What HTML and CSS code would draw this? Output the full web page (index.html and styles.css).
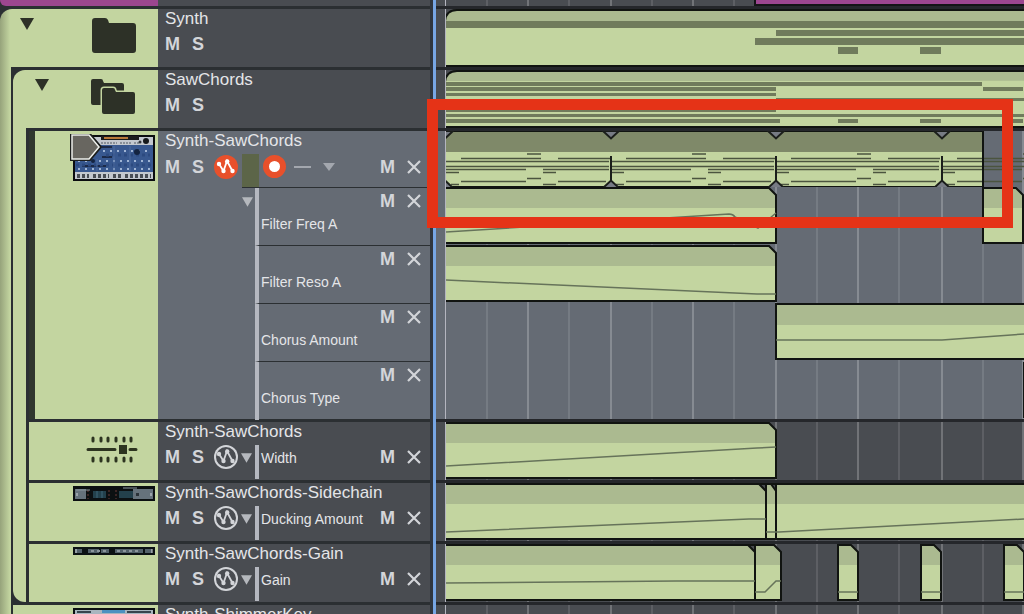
FILE: index.html
```
<!DOCTYPE html>
<html lang="en">
<head>
    <meta charset="UTF-8">
    <meta name="viewport" content="width=device-width, initial-scale=1.0">
    <title>Arrangement</title>
    <link rel="stylesheet" href="styles.css">
</head>
<body>
    <!-- shared shapes -->
    <svg class="defs" width="0" height="0">
        <defs>
            <symbol id="tri" viewBox="0 0 14 12"><path d="M0 0h14L7 12z" fill="currentColor"/></symbol>
            <symbol id="cross" viewBox="0 0 14 14"><path d="M1 1l12 12M13 1L1 13" stroke="currentColor" stroke-width="2.2" fill="none"/></symbol>
            <symbol id="auto" viewBox="0 0 24 24">
                <path d="M5 9l4.500 7L13 6l5.500 10" fill="none" stroke="currentColor" stroke-width="1.800"/>
                <circle cx="5" cy="9" r="2.200" fill="currentColor"/>
                <circle cx="9.500" cy="16" r="2.200" fill="currentColor"/>
                <circle cx="13.200" cy="6.500" r="2.200" fill="currentColor"/>
                <circle cx="18.500" cy="16" r="2.200" fill="currentColor"/>
            </symbol>
            <g id="grid">
                <path class="beat" d="M41 0v60M123 0v60M206 0v60M288 0v60M371 0v60M453 0v60M537 0v60"/>
                <path class="bar" d="M82 0v60M165 0v60M247 0v60M330 0v60M412 0v60M496 0v60M577 0v60"/>
            </g>
            <g id="phrase">
                <path d="M81 23h14M15 27.500h80M112 27.500h52M0 30.500h163M0 35.500h163M0 38.500h80M97 38.500h66M0 41.500h13M97 41.500h13M81 47.500h14M15 50.500h65M112 50.500h48M5 53.500h8M97 53.500h13"/>
            </g>
            <g id="joint">
                <path d="M-8 0L0 7.500 8 0z"/>
                <path d="M-8 57L0 49.500 8 57z"/>
                <path d="M0 25v25"/>
            </g>
            <g id="hit">
                <path class="clip" d="M0 1h13l7 7v48H0z"/>
                <path class="clip-head" d="M0 1h13l7 7v13H0z"/>
                <path class="edge" d="M0 1h13l7 7v48H0z"/>
                <path class="curve" d="M0 48h20"/>
            </g>
            <g id="clip330">
                <path class="clip" d="M-3 1h326l7 7v48H-3z"/>
                <path class="clip-head" d="M-3 1h326l7 7v13H-3z"/>
                <path class="edge" d="M-3 1h326l7 7v48H-3z"/>
            </g>
        </defs>
    </svg>

    <main class="arranger">
        <section class="tracks">
            <div class="previous-track"><div class="previous-color"></div></div>
            <div class="folder root">
                <div class="folder-head">
                    <div class="art">
                        <button class="fold" aria-label="Collapse Synth"><svg width="14" height="12"><use href="#tri"/></svg></button>
                        <svg width="44" height="36" viewBox="0 0 44 36"><path d="M3 0h10q2 0 3 2l1 3h24q3 0 3 3v24q0 3-3 3H3q-3 0-3-3V3q0-3 3-3z" fill="#2d3127"/></svg>
                    </div>
                    <div class="info">
                        <h2>Synth</h2>
                        <div class="controls"><button class="m">M</button><button class="s">S</button></div>
                    </div>
                </div>
                <div class="folder-body">
                    <div class="folder nested">
                        <div class="folder-head">
                            <div class="art">
                                <button class="fold" aria-label="Collapse SawChords"><svg width="14" height="12"><use href="#tri"/></svg></button>
                                <svg width="45" height="36" viewBox="0 0 45 36" fill="#2d3127">
                                    <path d="M2 0h8q2 0 2 2l1 2h18q2 0 2 2v20H2q-2 0-2-2V2q0-2 2-2z"/>
                                    <path d="M13 9h9q2 0 2 2l1 2h17q2 0 2 2v18q0 2-2 2H13q-2 0-2-2V11q0-2 2-2z" stroke="#c3d5a0" stroke-width="3" paint-order="stroke"/>
                                </svg>
                            </div>
                            <div class="info">
                                <h2>SawChords</h2>
                                <div class="controls"><button class="m">M</button><button class="s">S</button></div>
                            </div>
                        </div>
                        <div class="folder-body">
                            <article class="track selected">
                                <div class="art">
                                    <svg class="device" width="85" height="48" viewBox="0 0 85 48">
                                        <path d="M3 1h82v46H3z" fill="#0b0d10"/>
                                        <path d="M5 3h78v42H5z" fill="#c3c8cf"/>
                                        <path d="M31 2h38v4H31z" fill="#1b1b1c"/>
                                        <path d="M34 3h24v2H34z" fill="#b9793a"/>
                                        <path d="M5 11h78v27H5z" fill="#38588f"/>
                                        <path d="M31 9h16M50 9h12M64 9h5" stroke="#4f5661" stroke-dasharray="2 1"/>
                                        <path d="M32 13h10M32 23h10M12 32h24" stroke="#1c2a48" stroke-width="2"/>
                                        <path d="M33 17h48M8 27h74M8 35h74" stroke="#9fb4d4" stroke-width="2" stroke-dasharray="2 5"/>
                                        <path d="M6 31h76M36 21h44" stroke="#2c4a80" stroke-width="3" stroke-dasharray="3 3"/>
                                        <path d="M44 12v25M60 12v25M27 25v12" stroke="#4f6c9f"/>
                                        <circle cx="76" cy="7" r="3" fill="#16191c"/><circle cx="70" cy="8" r="1.500" fill="#33383e"/>
                                        <circle cx="67" cy="18" r="3" fill="#142441"/><circle cx="23" cy="27" r="2" fill="#142441"/>
                                        <path d="M7 42h12M23 42h16M43 42h9M55 42h26" stroke="#494e55" stroke-width="4" stroke-dasharray="3 2"/>
                                        <path d="M1 0h19l11 13-11 13H1z" fill="#686660" stroke="#1c1e1d" stroke-width="2"/>
                                        <path d="M2 1h17l10 12-10 12H2z" fill="none" stroke="#eceeea" stroke-width="1.500"/>
                                    </svg>
                                </div>
                                <div class="info">
                                    <h2>Synth-SawChords</h2>
                                    <div class="controls">
                                        <button class="m">M</button><button class="s">S</button>
                                        <button class="auto on" aria-label="Automation"><svg width="24" height="24"><use href="#auto"/></svg></button>
                                        <span class="meter"></span>
                                        <button class="record" aria-label="Record"></button>
                                        <span class="dash"></span>
                                        <button class="pick" aria-label="Input"><svg width="12" height="8" viewBox="0 0 14 12" preserveAspectRatio="none"><path d="M0 0h14L7 12z" fill="currentColor"/></svg></button>
                                        <button class="m end">M</button><button class="x" aria-label="Close"><svg width="14" height="14"><use href="#cross"/></svg></button>
                                    </div>
                                    <ul class="params">
                                        <li><button class="arrow" aria-label="Parameters"><svg width="11" height="10"><use href="#tri"/></svg></button><div class="param"><span>Filter Freq A</span><button class="m">M</button><button class="x" aria-label="Close"><svg width="14" height="14"><use href="#cross"/></svg></button></div></li>
                                        <li><div class="param"><span>Filter Reso A</span><button class="m">M</button><button class="x" aria-label="Close"><svg width="14" height="14"><use href="#cross"/></svg></button></div></li>
                                        <li><div class="param"><span>Chorus Amount</span><button class="m">M</button><button class="x" aria-label="Close"><svg width="14" height="14"><use href="#cross"/></svg></button></div></li>
                                        <li><div class="param"><span>Chorus Type</span><button class="m">M</button><button class="x" aria-label="Close"><svg width="14" height="14"><use href="#cross"/></svg></button></div></li>
                                    </ul>
                                </div>
                            </article>

                            <article class="track">
                                <div class="art mixer">
                                    <svg width="52" height="28" viewBox="0 0 52 28" stroke="#2d3420" stroke-width="3" stroke-linecap="round">
                                        <path d="M7 2v3M15 2v3M22 2v3M30 2v3M38 2v3M45 2v3M7 22v3M15 22v3M22 22v3M30 22v3M38 22v3M45 22v3M2 13.500h27M44 13.500h6"/>
                                        <path d="M33 9h8v9h-8z" fill="#2d3420" stroke="none"/>
                                    </svg>
                                </div>
                                <div class="info">
                                    <h2>Synth-SawChords</h2>
                                    <div class="controls">
                                        <button class="m">M</button><button class="s">S</button>
                                        <button class="auto" aria-label="Automation"><svg width="24" height="24"><use href="#auto"/></svg></button>
                                        <button class="arrow" aria-label="Parameters"><svg width="11" height="10"><use href="#tri"/></svg></button>
                                        <span class="name">Width</span>
                                        <button class="m end">M</button><button class="x" aria-label="Close"><svg width="14" height="14"><use href="#cross"/></svg></button>
                                    </div>
                                </div>
                            </article>

                            <article class="track">
                                <div class="art">
                                    <svg class="device" width="82" height="15" viewBox="0 0 82 15">
                                        <path d="M0 0h82v15H0z" fill="#0c1012"/>
                                        <path d="M2 3h11v10H2zM60 3h20v10H60z" fill="#66727c"/>
                                        <path d="M20 5h13v7H20zM46 5h14v7H46z" fill="#23404c"/>
                                        <path d="M24 5v7M29 5v7" stroke="#3f6577"/>
                                        <path d="M15 4v9M36 4v9M43 4v9" stroke="#6b3b39" stroke-dasharray="2 2"/>
                                        <path d="M3 4h14M50 2h14" stroke="#8a969d"/>
                                        <path d="M63 7h3v3h-3z" fill="#2a3138"/>
                                        <path d="M4 7v3M78 7v3" stroke="#cfd6da"/>
                                    </svg>
                                </div>
                                <div class="info">
                                    <h2>Synth-SawChords-Sidechain</h2>
                                    <div class="controls">
                                        <button class="m">M</button><button class="s">S</button>
                                        <button class="auto" aria-label="Automation"><svg width="24" height="24"><use href="#auto"/></svg></button>
                                        <button class="arrow" aria-label="Parameters"><svg width="11" height="10"><use href="#tri"/></svg></button>
                                        <span class="name">Ducking Amount</span>
                                        <button class="m end">M</button><button class="x" aria-label="Close"><svg width="14" height="14"><use href="#cross"/></svg></button>
                                    </div>
                                </div>
                            </article>

                            <article class="track">
                                <div class="art">
                                    <svg class="device" width="82" height="8" viewBox="0 0 82 8">
                                        <path d="M0 0h82v8H0z" fill="#0c1214"/>
                                        <path d="M2 4h7M15 4h11M28 4h8M42 4h28M72 4h7" stroke="#53616a" stroke-width="4"/>
                                        <path d="M18 4h18M44 4h24" stroke="#8b969c" stroke-width="2" stroke-dasharray="3 3"/>
                                        <path d="M3 2v4M79 2v4" stroke="#d8dddf"/>
                                    </svg>
                                </div>
                                <div class="info">
                                    <h2>Synth-SawChords-Gain</h2>
                                    <div class="controls">
                                        <button class="m">M</button><button class="s">S</button>
                                        <button class="auto" aria-label="Automation"><svg width="24" height="24"><use href="#auto"/></svg></button>
                                        <button class="arrow" aria-label="Parameters"><svg width="11" height="10"><use href="#tri"/></svg></button>
                                        <span class="name">Gain</span>
                                        <button class="m end">M</button><button class="x" aria-label="Close"><svg width="14" height="14"><use href="#cross"/></svg></button>
                                    </div>
                                </div>
                            </article>
                        </div>
                    </div>

                    <article class="track">
                        <div class="art">
                            <svg class="device" width="82" height="46" viewBox="0 0 82 46">
                                <path d="M0 0h82v46H0z" fill="#0c1012"/>
                                <path d="M2 2h78v42H2z" fill="#a9b6bf"/>
                                <path d="M29 2h23v3H29z" fill="#4d91c0"/>
                                <path d="M4 4h14M54 4h24" stroke="#39454e" stroke-width="2"/>
                            </svg>
                        </div>
                        <div class="info">
                            <h2>Synth-ShimmerKey</h2>
                        </div>
                    </article>
                </div>
            </div>
        </section>

        <div class="splitter"></div>

        <section class="lanes">
            <div class="lane first">
                <svg>
                    <use href="#grid"/>
                    <rect x="309" y="-4" width="3000" height="9" fill="#9c468f" stroke="#141416" stroke-width="2"/>
                </svg>
            </div>
            <div class="lane">
                <svg>
                    <path class="clip" d="M-1 12Q0 1 11 1H3000V57H-1z"/>
                    <path class="clip-head" d="M-1 12Q0 1 11 1H3000V12z"/>
                    <path class="edge" d="M-1 12Q0 1 11 1H3000V57H-1z"/>
                    <path class="notes" d="M0 12h3000v7H0zM330 21h3000v6H330zM309 29h3000v7H309zM392 38h20v7h-20zM474 38h21v7h-21z"/>
                </svg>
            </div>
            <div class="lane">
                <svg>
                    <path class="clip" d="M-1 12Q0 1 11 1H3000V57H-1z"/>
                    <path class="clip-head" d="M-1 11Q0 1 11 1H3000V10z"/>
                    <path class="edge" d="M-1 12Q0 1 11 1H3000V57H-1z"/>
                    <path class="notes" d="M0 12h536v4H0zM537 17h40v4h-40zM0 17h330v4H0zM0 23h330v3H0zM330 28h3000v3H330zM0 39h330v3H0zM0 44h3000v3H0zM0 49h334v4H0zM392 49h20v4h-20zM474 49h21v4h-21zM556 49h21v4h-21z"/>
                </svg>
            </div>
            <div class="lane group">
                <svg class="main-lane">
                    <use href="#grid"/>
                    <path class="clip" d="M-2 0h539v56H-2z"/>
                    <path d="M-2 0h539v21H-2z" fill="#7f8969"/>
                    <g class="midi">
                        <use href="#phrase"/><use href="#phrase" x="165"/><use href="#phrase" x="330"/><use href="#phrase" x="496"/>
                    </g>
                    <path class="edge" d="M-2 0h539v56H-2z"/>
                    <g class="joints">
                        <use href="#joint" x="-1"/><use href="#joint" x="165"/><use href="#joint" x="330"/><use href="#joint" x="496"/>
                    </g>
                </svg>
                <svg>
                    <use href="#grid"/>
                    <use href="#clip330"/>
                    <path class="curve" d="M0 45L283 27q4 0 6 3l23 11 18-15"/>
                    <path class="clip" d="M537 1h33l7 7v48h-40z"/>
                    <path class="clip-head" d="M537 1h33l7 7v13h-40z"/>
                    <path class="edge" d="M537 1h33l7 7v48h-40z"/>
                </svg>
                <svg>
                    <use href="#grid"/>
                    <use href="#clip330"/>
                    <path class="curve" d="M0 35L311 49h19"/>
                </svg>
                <svg>
                    <use href="#grid"/>
                    <path class="clip" d="M330 1h3000v55H330z"/>
                    <path class="clip-head" d="M330 1h3000v21H330z"/>
                    <path class="edge" d="M330 1h3000v55H330z"/>
                    <path class="curve" d="M330 37h166l82-6"/>
                </svg>
                <svg>
                    <use href="#grid"/>
                    <path class="edge" d="M578 1v56"/>
                </svg>
            </div>
            <div class="lane">
                <svg>
                    <use href="#grid"/>
                    <use href="#clip330"/>
                    <path class="curve" d="M0 44L311 26l19-1"/>
                </svg>
            </div>
            <div class="lane">
                <svg>
                    <use href="#grid"/>
                    <path class="clip" d="M-2 1h3000v55H-2z"/>
                    <path class="clip-head" d="M-2 1h3000v20H-2z"/>
                    <path class="edge" d="M-2 1h3000v55H-2zM320 1v55M330 1v55"/>
                    <path class="corner" d="M313 1h7v7zM325 1h5v7z"/>
                    <path class="curve" d="M0 49l303-13h17M320 49h13l245-13"/>
                </svg>
            </div>
            <div class="lane">
                <svg>
                    <use href="#grid"/>
                    <path class="clip" d="M-2 1h330l7 7v48H-2z"/>
                    <path class="clip-head" d="M-2 1h330l7 7v13H-2z"/>
                    <path class="edge" d="M-2 1h330l7 7v48H-2zM309 1v55"/>
                    <path class="corner" d="M302 1h7v7z"/>
                    <path class="curve" d="M0 39l230-2h79M309 48h10l11-11h5"/>
                    <use href="#hit" x="392"/><use href="#hit" x="475"/><use href="#hit" x="558"/>
                </svg>
            </div>
            <div class="lane">
                <svg><use href="#grid"/></svg>
            </div>
        </section>
        <div class="highlight"></div>
    </main>
</body>
</html>
```

FILE: styles.css
```
* {
    box-sizing: border-box;
}
body {
    margin: 0;
    height: 100vh;
    overflow: hidden;
    background: #494c51;
    font-family: "Liberation Sans", Arial, sans-serif;
    color: #e4e5e8;
}
.defs {
    position: absolute;
}
.arranger {
    display: flex;
    position: relative;
    height: 100%;
    overflow: hidden;
}

/* track list */
.tracks {
    flex: 0 0 430px;
    background: #2b2f32;
}
.previous-track {
    height: 9px;
    padding-bottom: 3px;
    background: linear-gradient(to right, #2b2f32 158px, #494c51 158px) no-repeat;
    background-size: 100% 6px;
}
.previous-color {
    width: 158px;
    height: 6px;
    background: #9c468f;
    border-bottom-left-radius: 8px;
}
.folder {
    background: #c3d5a0;
    border-top-left-radius: 12px;
    overflow: hidden;
}
.root {
    background: linear-gradient(to right, #96a37b, #c3d5a0 10px);
}
.folder-head {
    display: flex;
    height: 61px;
    margin-left: 11px;
    border-bottom: 3px solid #2b2f32;
}
.folder-body {
    margin-left: 11px;
    border-left: 2px solid #2b2f32;
    background: #2b2f32;
}
.nested {
    border-bottom-left-radius: 12px;
    margin-bottom: 3px;
}
.nested .folder-head,
.nested .folder-body {
    margin-left: 13px;
}
.nested .folder-body {
    border-left-width: 3px;
}
.track {
    display: flex;
    height: 61px;
    border-bottom: 3px solid #2b2f32;
}
.nested .track:last-child {
    height: 58px;
    border-bottom: 0;
}
.selected {
    height: 291px;
}
.selected .art {
    border-left: 6px solid #30372e;
}
.art {
    flex: 1;
    display: flex;
    align-items: flex-start;
    justify-content: flex-end;
    padding: 3px 3px 0 0;
    background: #c3d5a0;
}
.folder-head .art {
    justify-content: space-between;
    padding: 9px 22px 0 9px;
    background: none;
}
.mixer {
    padding: 14px 20px 0 0;
}
.info {
    flex: 0 0 272px;
    padding-left: 7px;
    background: #494c51;
}
.selected .info {
    background: #656b74;
}
h2 {
    margin: 0;
    font-size: 17px;
    font-weight: normal;
    line-height: 20px;
    white-space: nowrap;
}
button {
    flex: none;
    display: flex;
    align-items: center;
    margin: 0;
    padding: 0;
    border: 0;
    background: none;
    color: #d3d5d9;
    font: bold 18px/24px "Liberation Sans", Arial, sans-serif;
    cursor: pointer;
}
button:hover {
    color: #fff;
}
.fold,
.fold:hover {
    color: #2d3127;
}
.controls {
    display: flex;
    align-items: center;
    height: 38px;
    padding-bottom: 8px;
}
.selected .controls {
    height: 36px;
    padding-bottom: 0;
}
.selected .controls > * {
    margin-bottom: 5px;
}
.m {
    width: 27px;
}
.s {
    width: 22px;
}
.x {
    width: 23px;
}
.auto {
    width: 24px;
    height: 24px;
    border-radius: 50%;
    box-shadow: inset 0 0 0 2px #d3d5d9;
}
.auto.on {
    background: #e8502b;
    box-shadow: none;
    color: #fff;
}
.arrow {
    width: 17px;
    padding: 2px 0 0 3px;
    color: #b5b8bd;
}
.name,
.param {
    border-left: 4px solid #b5b8c0;
    font-size: 14px;
    white-space: nowrap;
}
.name {
    flex: 1;
    height: 34px;
    padding-left: 2px;
    line-height: 26px;
    margin-bottom: -10px;
}
.selected .controls .meter {
    width: 17px;
    height: 33px;
    margin: 2px 4px 0 4px;
    background: #5c6548;
}
.record {
    width: 23px;
    height: 23px;
    border: 6px solid #e8502b;
    border-radius: 50%;
    background: #fff;
}
.dash {
    width: 17px;
    height: 2px;
    margin: 0 12px 0 8px;
    background: #a3a7ae;
}
.pick {
    color: #a3a7ae;
}
.selected .end {
    margin-left: auto;
}

/* automation parameters under the selected track */
.params {
    margin: 0 0 0 77px;
    padding: 0;
    list-style: none;
    border-top: 1px solid #2b2f32;
}
.params li {
    display: flex;
    height: 58px;
    justify-content: flex-end;
}
.params .arrow {
    width: 13px;
    height: 28px;
    padding: 0;
}
.param {
    flex: 0 0 175px;
    display: flex;
    align-items: flex-start;
    padding: 1px 0 0 2px;
    border-bottom: 1px solid #2b2f32;
}
.params li:last-child .param {
    border-bottom: 0;
}
.param span {
    flex: 1;
    padding-top: 26px;
    line-height: 18px;
}
.param .x {
    height: 24px;
}

/* timeline */
.splitter {
    flex: 0 0 6px;
    border-left: 3px solid #30363f;
    border-right: 3px solid #77a6e5;
}
.lanes {
    flex: 1;
    min-width: 0;
}
.lane {
    padding-left: 9px;
    border-bottom: 3px solid #25272b;
    background: #494c51;
}
.lane.group {
    background: #656b74;
}
.lane svg {
    display: block;
    width: 100%;
    height: 58px;
    border-left: 1px solid #b4b5bf;
}
.lane.first svg {
    height: 6px;
}
.lane .main-lane {
    height: 56px;
}
.beat,
.bar {
    fill: none;
    stroke: rgba(255, 255, 255, 0.11);
    stroke-width: 2;
}
.bar {
    stroke: rgba(255, 255, 255, 0.22);
}
.clip {
    fill: #c3d5a0;
}
.clip-head {
    fill: #abba90;
}
.edge {
    fill: none;
    stroke: #111411;
    stroke-width: 2;
}
.corner {
    fill: #494c51;
    stroke: #111411;
    stroke-width: 2;
}
.notes {
    fill: #707b5c;
}
.midi {
    fill: none;
    stroke: #4b543f;
    stroke-width: 1.5;
}
.joints {
    fill: #777b84;
    stroke: #1b1e1b;
    stroke-width: 2;
}
.curve {
    fill: none;
    stroke: #66735a;
    stroke-width: 1.5;
}

/* frame laid over the arrangement */
.highlight {
    position: absolute;
    left: 427px;
    right: 11px;
    top: 99px;
    height: 129px;
    border: 11px solid #e53317;
}
```
